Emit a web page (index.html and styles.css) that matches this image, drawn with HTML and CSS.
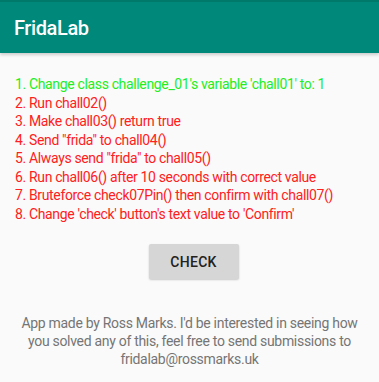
FILE: index.html
```html
<!DOCTYPE html>
<html lang="en">
<head>
  <meta charset="UTF-8"/>
  <title>FridaLab</title>
  <link rel="stylesheet" href="styles.css">
</head>
<body>
  <header class="toolbar">
    <h1>FridaLab</h1>
  </header>

  <main>
    <ol class="challenges">
      <li class="done">1. Change class challenge_01's variable 'chall01' to: 1</li>
      <li>2. Run chall02()</li>
      <li>3. Make chall03() return true</li>
      <li>4. Send "frida" to chall04()</li>
      <li>5. Always send "frida" to chall05()</li>
      <li>6. Run chall06() after 10 seconds with correct value</li>
      <li>7. Bruteforce check07Pin() then confirm with chall07()</li>
      <li>8. Change 'check' button's text value to 'Confirm'</li>
    </ol>

    <div class="actions">
      <button class="btn-check">CHECK</button>
    </div>
  </main>

  <footer>
    App made by Ross Marks. I'd be interested in seeing how you solved any of this, feel free to send submissions to fridalab@rossmarks.uk
  </footer>
</body>
</html>
```

FILE: styles.css
```css
:root {
  --teal: #00897b;
  --teal-dark: #00796b;
  --bg: #fafafa;
  --green: #22ee22;
  --red: #ff2020;
  --btn: #d6d6d6;
  --muted: #757575;
}
* { box-sizing:border-box; margin:0; padding:0; font-family:Roboto,"Liberation Sans",sans-serif; }
body {
  background:var(--bg);
  width:379px; height:382px; overflow:hidden;
}

/* —— Toolbar —— */
.toolbar {
  height:53px;
  background:var(--teal);
  border-top:2px solid var(--teal-dark);
  padding:0 14px;
  display:flex; align-items:center;
  box-shadow:0 2px 3px rgba(0,0,0,0.18);
}
.toolbar h1 {
  color:#fff; font-size:20px; font-weight:500;
  letter-spacing:-0.4px;
}

/* —— Challenges —— */
.challenges {
  list-style:none;
  padding:22px 10px 0 15px;
}
.challenges li {
  color:var(--red);
  font-size:14px; line-height:18.5px;
  letter-spacing:-0.35px;
  white-space:nowrap;
}
.challenges li.done { color:var(--green); }

.actions {
  display:flex; justify-content:center;
  margin-top:21px;
  padding-left:8px;
}
.btn-check {
  width:90px; height:35px;
  background:var(--btn); color:#222;
  border:none; border-radius:2px;
  box-shadow:0 1px 2px rgba(0,0,0,0.2);
  font-size:14px; font-weight:500; letter-spacing:0.3px;
}

/* —— Footer —— */
footer {
  margin-top:35px;
  padding:0 12px;
  text-align:center;
  color:var(--muted);
  font-size:14px; line-height:18px;
  letter-spacing:-0.3px;
}
```
